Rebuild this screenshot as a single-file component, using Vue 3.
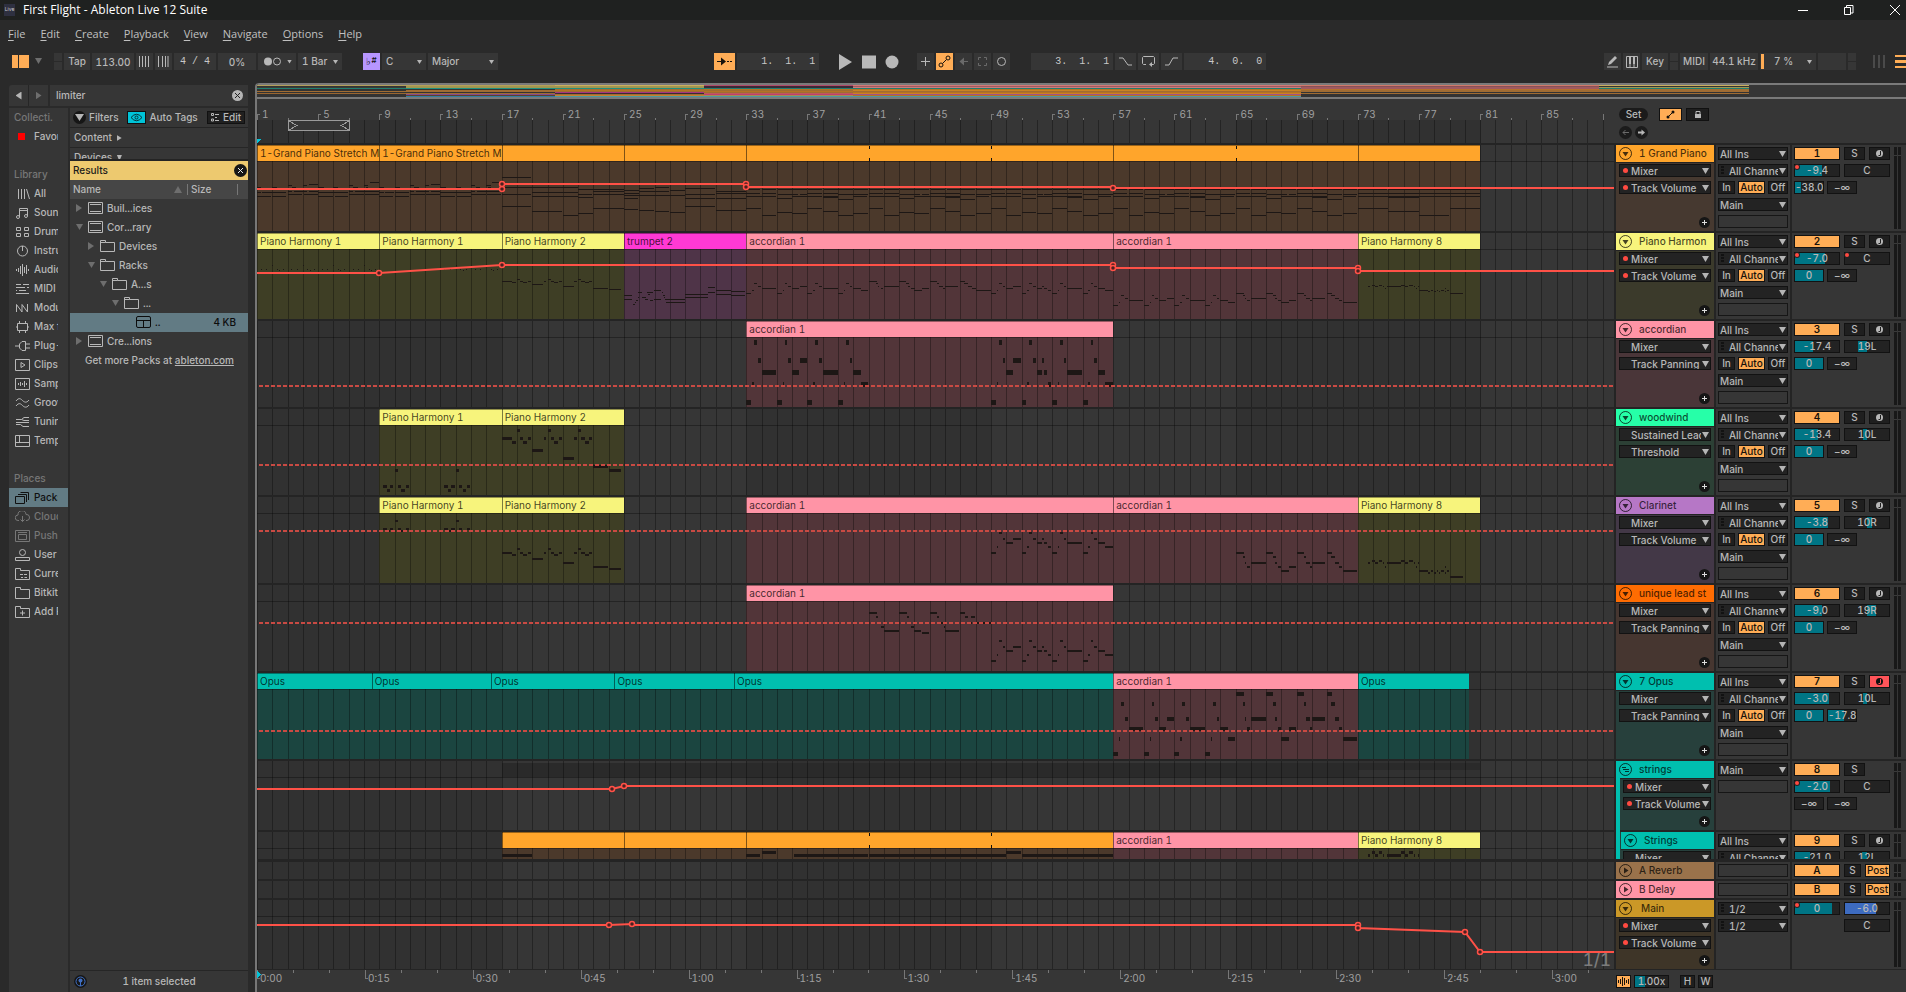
<script setup>
const W = 1357
const BAR = 15.29
const bx = (b) => Math.round((b - 1) * BAR)
const pct = (b) => ((b - 1) * BAR * 100) / W + '%'

const menus = ['File', 'Edit', 'Create', 'Playback', 'View', 'Navigate', 'Options', 'Help']

const C = {
  or: ['#ffa52b', '#4b392b'],
  ye: ['#f7f47c', '#3e3e25'],
  pk: ['#ff94a6', '#523539'],
  mg: ['#ff39d4', '#4f3448'],
  te: ['#00bfaf', '#1b4540'],
}

// Notes are [start bar, pitch step downwards, length in bars].
const harm1 = [0, 4].flatMap((o) => [[o + .25, 4, .25], [o + .7, 4, .25], [o + 1.2, 4, .25], [o + 1.75, 4, .2], [o + .5, 5, .2], [o + 1.45, 5, .25], [o + 1, 0, .22]])
const harm1b = [0, 2, 4, 6].flatMap((o) => [[o + .25, 4, .08], [o + .6, 4, .08], [o + 1, 0, .08], [o + 1.3, 4, .08], [o + 1.7, 4, .08], [o + 1.45, 5, .08]])
const harm2 = [[0, 2, .68], [.7, 3, .25], [1, 0, .24], [1.22, 2, .2], [1.42, 3, .25], [1.7, 2, .26], [2, 5, .74], [2.75, 2, .2], [3, 0, .27], [3.2, 2, .25], [3.45, 3, .25], [3.72, 2, .26], [4, 7, .78], [4.74, 2, .22], [5, 0, .22], [5.22, 2, .24], [5.46, 3, .26], [5.72, 2, .24], [6, 9, 1], [7, 10, .85]]
const riff = (o) => [[o, 12, .35], [o + .38, 9, .12], [o + .52, 2, .2], [o + .76, 5, .2]]
const accA = [...riff(0), ...riff(2), ...riff(4), ...riff(6), [1, 7, .96], [3, 7, .5], [3.5, 5, .48], [5, 7, 1], [7, 7, .5], [7.5, 9, .5]]
const accC = [...riff(16), ...riff(18), ...riff(20), ...riff(22), [17, 7, .5], [17.45, 5, .52], [19, 7, .35], [19.35, 5, .16], [19.5, 7, .22], [19.72, 9, .26], [21, 7, .98], [23, 7, .5], [23.45, 9, .55]]
const accB = [[8, 0, .55], [8.5, 2, .14], [8.62, 5, .1], [8.78, 7, .22], [9, 5, 1], [10, 0, .48], [10.45, 2, .2], [10.6, 5, .12], [10.75, 7, .28], [11, 9, .5], [11.5, 7, .46], [12, 0, .52], [12.5, 2, .14], [12.6, 5, .3], [12.88, 7, .14], [13, 5, .88], [14, 0, .32], [14.25, 2, .25], [14.5, 5, .28], [14.76, 7, .26], [15, 9, 1]]
const accU = [[8, 0, .55], [8.5, 2, .14], [8.78, 7, .24], [9, 9, 1], [10, 0, .52], [10.5, 2, .14], [10.75, 7, .26], [11, 9, .48], [11.5, 10, .5], [12, 0, .48], [12.5, 2, .12], [12.75, 5, .14], [12.9, 7, .14], [13, 9, .96], [14, 0, .32], [14.3, 2, .22], [14.7, 2, .26], [14.7, 5, .12], [15.1, 5, .14], [15.5, 5, .14], [15.9, 5, .1]]
const harm8 = [[.65, 1, .2], [.9, 0, .25], [1.15, 1, .18], [1.35, 0, .27], [1.65, 1, .1], [1.78, 3, .1], [1.9, 1, .95], [2.85, 0, .25], [3.1, 1, .2], [3.35, 0, .26], [3.65, 1, .1], [3.8, 3, .1], [3.92, 1, .08], [4, 5, .6], [4.6, 6, .16], [4.78, 5, .16], [4.95, 6, .16], [5.15, 5, .12], [5.3, 6, .12], [5.45, 5, .2], [5.68, 3, .12], [5.7, 6, .1], [5.85, 5, .15], [6, 8, .92]]
const trumpet = [[0, 62, .55], [0, 66, .55], [.62, 71, .1], [.72, 69, .1], [.82, 67, .1], [.9, 64, .12], [.95, 59, .26], [1.2, 64, .3], [1.35, 66, .25], [1.5, 59, .42], [1.55, 61, .2], [1.7, 67, .24], [1.98, 57, .46], [1.98, 66, .45], [2.5, 59, .1], [2.58, 62, .1], [2.62, 64, .1], [2.7, 66, 1.3], [2.75, 69, 1.25], [4, 61, 1.5], [4, 64, 1.5], [5.5, 54, .46], [5.5, 59, .46], [6, 57, 1.02], [6, 61, 1], [7, 58, .92], [7, 62, .92]]
const seq = (y, ...p) => p.map(([a, b]) => [a, y, b - a])
const piano1 = [
  ...seq(47, [0, .3], [.35, 1], [1, 1.95], [4, 5.1], [5.1, 6]), ...seq(51, [0, .95], [1, 1.95], [4, 5], [5.1, 6]),
  ...seq(46, [2, 2.3], [2.4, 3.3], [3.4, 4], [6, 6.3], [6.4, 8]), ...seq(49, [2, 3], [3.05, 4], [6, 7], [7.05, 8]),
  ...seq(42, [0, .3], [1, 1.35], [4, 4.4], [5, 5.35], [2.3, 2.6], [6.3, 6.6], [7.1, 7.3]), ...seq(40, [2, 2.3], [3, 3.3], [6, 6.3], [7, 7.3]), ...seq(39, [3.4, 4]), ...seq(37, [7.4, 8]),
]
const piano2 = [...seq(32, [0, 1.95]), ...seq(42, [0, 5]), ...seq(49, [0, 1.95], [5, 5.95], [6, 8]), ...seq(47, [2, 5]), ...seq(51, [2, 5]), ...seq(44, [5, 8]), ...seq(52, [5, 6]), ...seq(46, [6, 8]), ...seq(61, [0, 1.95]), ...seq(66, [2, 4]), ...seq(70, [4, 5]), ...seq(68, [5, 6]), ...seq(63, [6, 8])]
const piano3 = [...seq(45, [0, 1], [3, 4]), ...seq(43, [1, 2], [4, 6]), ...seq(42, [2, 3]), ...seq(48, [0, 1], [6, 8]), ...seq(46, [1, 3], [6, 8]), ...seq(50, [0, 1], [1, 4]), ...seq(49, [4, 6]), ...seq(53, [0, .95], [4, 6], [6, 8]), ...seq(64, [0, .95]), ...seq(65, [1, 2], [6, 8]), ...seq(66, [2, 3]), ...seq(67, [3, 4]), ...seq(61, [4, 6])]
const chug = (o) => [...seq(44, [o, o + .95], [o + 1, o + 2], [o + 2.05, o + 4], [o + 4.05, o + 5], [o + 5.1, o + 7], [o + 7.05, o + 8]), ...seq(48, [o, o + .95], [o + 1, o + 2], [o + 4, o + 5], [o + 5, o + 6]), ...seq(49, [o + 2.05, o + 3], [o + 3, o + 3.4], [o + 3.5, o + 4], [o + 6, o + 7], [o + 7, o + 8]), ...seq(51, [o, o + 2], [o + 3, o + 5], [o + 5, o + 6], [o + 7, o + 7.9]), ...seq(52, [o + 5, o + 6]), ...seq(53, [o + 2, o + 3]), ...seq(54, [o + 6, o + 7]), ...seq(63, [o, o + 1], [o + 4, o + 5]), ...seq(70, [o + 1, o + 2], [o + 6, o + 7]), ...seq(67, [o + 2, o + 3]), ...seq(68, [o + 3, o + 4], [o + 7, o + 8]), ...seq(66, [o + 5, o + 6])]
const piano8 = [...seq(44, [0, 1.95], [2, 4], [4, 8]), ...seq(48, [0, 2], [2, 8]), ...seq(51, [0, 2], [2, 8]), ...seq(52, [2, 4]), ...seq(63, [0, 2], [6, 8]), ...seq(66, [2, 4]), ...seq(70, [4, 6])]
const raw = (n) => [n, 0, 1, 1]

// Clip: [start, end, colour, name, [notes, top, step, height], ...]
const tracks = [
  { n: '1', name: '1 Grand Piano', h: 86, col: '#ffa52b', body: '#463930', dev: ['Mixer', 'Track Volume'], dots: [1, 1], vol: '-9.4', vf: 61, vd: 1, pan: 'C', sends: [['-38.0', 22], ['−∞', 0]],
    clips: [[1, 9, 'or', '1-Grand Piano Stretch M', raw(piano1)], [9, 17, 'or', '1-Grand Piano Stretch M', raw(piano1)], [17, 25, 'or', '', raw(piano2)], [25, 33, 'or', '', raw(piano3)], [33, 57, 'or', '', raw([...chug(0), ...chug(8), ...chug(16)])], [57, 73, 'or', '', raw([...chug(0), ...chug(8)])], [73, 81, 'or', '', raw(piano8)]],
    marks: [41, 49, 65], line: [[1, 44], [17, 44], [17, 39], [33, 39], [33, 42], [57, 42], [57, 43], [90, 43]], pts: [[17, 44], [17, 39], [33, 39], [33, 42], [57, 43]] },
  { n: '2', name: 'Piano Harmon', h: 86, col: '#f7f47c', body: '#3b3a2b', dev: ['Mixer', 'Track Volume'], dots: [1, 1], vol: '-7.0', vf: 68, vd: 1, pan: 'C', pd: 1, sends: [['0', 100], ['−∞', 0]],
    clips: [[1, 9, 'ye', 'Piano Harmony 1', [harm1b, 32, 1, 1]], [9, 17, 'ye', 'Piano Harmony 1', [harm1b.slice(12), 32, 1, 1]], [17, 25, 'ye', 'Piano Harmony 2', [harm2, 46, 1, 1]], [25, 33, 'mg', 'trumpet 2', raw(trumpet)], [33, 57, 'pk', 'accordian 1', [[...accA, ...accB, ...accC], 48, 1, 1]], [57, 73, 'pk', 'accordian 1', [[...accA, ...accB], 60, 1, 1]], [73, 81, 'ye', 'Piano Harmony 8', [harm8, 52, 1, 1]]],
    line: [[1, 40], [9, 40], [17, 32], [57, 32], [57, 35], [73, 35], [73, 38], [90, 38]], pts: [[9, 40], [17, 32], [57, 32], [57, 35], [73, 35], [73, 38]] },
  { n: '3', name: 'accordian', h: 86, col: '#ff94a6', body: '#4a3639', dev: ['Mixer', 'Track Panning'], vol: '-17.4', vf: 41, pan: '19L', pf: [29, 50], sends: [['0', 100], ['−∞', 0]],
    clips: [[33, 57, 'pk', 'accordian 1', [[...accA, ...accC], 7, 6, 5]]], dash: 65 },
  { n: '4', name: 'woodwind', h: 86, col: '#26ffa8', body: '#2c4035', dev: ['Sustained Lead', 'Threshold'], vol: '-13.4', vf: 52, pan: '10L', pf: [41, 50], sends: [['0', 100], ['−∞', 0]],
    clips: [[9, 17, 'ye', 'Piano Harmony 1', [harm1, 60, 4, 3]], [17, 25, 'ye', 'Piano Harmony 2', [harm2, 20, 4, 3]]], dash: 56 },
  { n: '5', name: 'Clarinet', h: 86, col: '#b677c6', body: '#433847', dev: ['Mixer', 'Track Volume'], vol: '-3.8', vf: 75, pan: '10R', pf: [50, 61], sends: [['0', 100], ['−∞', 0]],
    clips: [[9, 17, 'ye', 'Piano Harmony 1', [harm1, 23, 2, 2]], [17, 25, 'ye', 'Piano Harmony 2', [harm2, 51, 2, 2]], [33, 57, 'pk', 'accordian 1', [accC, 31, 2, 2]], [57, 73, 'pk', 'accordian 1', [accB, 55, 2, 2]], [73, 81, 'ye', 'Piano Harmony 8', [harm8, 63, 2, 2]]], dash: 34 },
  { n: '6', name: 'unique lead st', h: 86, col: '#ff6c02', body: '#463630', dev: ['Mixer', 'Track Panning'], vol: '-9.0', vf: 61, pan: '19R', pf: [50, 71], sends: [['0', 100], ['−∞', 0]],
    clips: [[33, 57, 'pk', 'accordian 1', [accU, 27, 2, 2], [accC, 51, 2, 2]]], dash: 38 },
  { n: '7', name: '7 Opus', h: 86, col: '#00bfaf', body: '#27403c', dev: ['Mixer', 'Track Panning'], vol: '-3.0', vf: 77, pan: '10L', pf: [41, 50], armed: 1, sends: [['0', 100], ['-17.8', 58]],
    clips: [[1, 8.5, 'te', 'Opus'], [8.5, 16.3, 'te', 'Opus'], [16.3, 24.38, 'te', 'Opus'], [24.38, 32.2, 'te', 'Opus'], [32.2, 57, 'te', 'Opus'], [57, 73, 'pk', 'accordian 1', [[...accA, ...accB], 19, 5, 4]], [73, 80.3, 'te', 'Opus']], dash: 58 },
  { n: '8', name: 'strings', kind: 'group', h: 69, col: '#00bfaf', body: '#27403c', dev: ['Mixer', 'Track Volume'], dots: [1, 1], vol: '-2.0', vf: 80, vd: 1, pan: 'C', sends: [['−∞', 0], ['−∞', 0]],
    clips: [], ghost: 1, line: [[1, 28], [24.2, 28], [25, 25], [90, 25]], pts: [[24.2, 28], [25, 25]] },
  { n: '9', name: 'Strings', kind: 'child', h: 27, col: '#00bfaf', body: '#27403c', dev: ['Mixer'], vol: '-21.0', vf: 34, pan: '12L', pf: [39, 50], sends: [],
    clips: [[17, 25, 'or', '', [[[0, 0, 2]], 22, 1, 3]], [25, 33, 'or', ''], [33, 57, 'or', '', [[[0, 0, .9], [3.1, 0, 4.9], [8, 0, 9], [18, 0, 6], [1, -3, 1], [17, -3, 1]], 22, 1, 3]], [57, 73, 'pk', 'accordian 1'], [73, 81, 'ye', 'Piano Harmony 8', [harm8, 19, 3, 3]]], marks: [41, 49] },
  { n: 'A', name: 'A Reverb', kind: 'ret', h: 17, col: '#9a724b', clips: [] },
  { n: 'B', name: 'B Delay', kind: 'ret', h: 17, col: '#ff94a6', clips: [] },
  { n: 'M', name: 'Main', kind: 'master', h: 69, col: '#cb9827', body: '#3e3528', dev: ['Mixer', 'Track Volume'], dots: [1, 1], clips: [],
    line: [[1, 25], [24, 25], [25.5, 24], [25.5, 25], [73, 25], [73, 28], [80, 32], [81, 52], [90, 52]], pts: [[24, 25], [25.5, 24], [73, 25], [73, 28], [80, 32], [81, 52]] },
]
const io = (t) => (!t.kind || t.kind === 'child')
const rects = (c) => c.slice(4).flatMap(([notes, top, step, h]) => notes.map(([s, p, l]) => ({ x: (c[0] - 1 + s) * BAR, y: top + p * step, w: Math.max(1, l * BAR - .4), h })))
const poly = (l) => l.map(([b, y]) => bx(b) + ',' + y).join(' ')
const bars = Array.from({ length: 89 }, (_, i) => i + 1)
const labels = Array.from({ length: 22 }, (_, i) => i * 4 + 1)
const shades = [1, 33, 65]
const ticks5 = Array.from({ length: 38 }, (_, i) => ({ x: Math.round(i * 35.97), big: i % 3 === 0 }))
const times = Array.from({ length: 13 }, (_, i) => ({ left: (i * 107.9 * 100) / W + '%', t: Math.floor(i / 4) + ':' + String((i % 4) * 15).padStart(2, '0') }))

const D = '#333333'
const overview = [
  [1, 9, ['#b3a05a', D, '#3c3c34', '#1f7f72', D, D, '#a06c33', D, '#9a6630', D, D, D]],
  [9, 17, ['#b3a05a', '#a2964f', '#a2964f', '#1f9080', D, '#a06c33', '#a06c33', D, '#a06c33', '#83498f', '#5a4030', '#2f7fa0']],
  [17, 25, ['#c9b060', '#a2964f', '#a2964f', '#1f9080', '#a06c33', '#b57224', '#a06c33', '#a5367f', '#3c2a35', '#a06c33', '#c58030', '#4a9aa0']],
  [25, 33, ['#b04a6a', '#3c2a35', '#3c2a35', '#1f7f72', '#b57224', '#a06c33', '#b57224', '#a06c33', '#c05a58', '#c03f72', '#a88a50', '#4a9aa0']],
  [33, 57, ['#d07a78', '#a05a60', '#d07a78', '#1f7f72', '#b57224', '#c98224', '#a06c33', '#b57224', '#c98224', '#a0508a', '#b57224', '#4a9aa0']],
  [57, 73, ['#d07a6a', '#8a5055', '#a05a60', '#a05a60', '#b5702c', '#a06c33', '#a06c33', D, '#a06c33', D, D, D]],
  [73, 81, ['#c9b060', D, '#a2964f', '#1f7f72', '#a06c33', '#a06c33', '#a06c33', D, '#a06c33', D, D, D]],
]

const library = [
  ['All', 'M3.5 1v10M6.500 1v10M9.500 1v10M11.500 1l3 10'],
  ['Sounds', 'M4.500 10V1.500h8V9M4.500 3.500h8M4.500 10a1.500 1.500 0 1 1-3 0a1.500 1.500 0 1 1 3 0M12.500 9a1.500 1.500 0 1 1-3 0a1.500 1.500 0 1 1 3 0'],
  ['Drums', 'M1.500 1.500h4v3h-4zM9.500 1.500h4v3h-4zM1.500 7.500h4v3h-4zM9.500 7.500h4v3h-4z'],
  ['Instruments', 'M7.500 1v5M12.500 6a5 5 0 1 1-10 0a5 5 0 1 1 10 0'],
  ['Audio Effects', 'M1.500 5v2M3.500 4v4M5.500 2v8M7.500 0v12M9.500 3v6M11.500 1v9M13.500 5v2'],
  ['MIDI Effects', 'M1 1.500h5M8 1.500h6M1 4.500h9M12 4.500h2M4 7.500h7M1 10.500h13M1 7.500h1'],
  ['Modulators', 'M1.500 10V2.500l5.500 7.500V2.500l5.500 7.500V2'],
  ['Max for Live', 'M2.500 2.500h10v7h-10zM4.500 0v2M10.500 0v2M4.500 10v2M10.500 10v2M1 6h1M13 6h1'],
  ['Plug-Ins', 'M0 6h4M10.500 1.500H7L4.500 4v4L7 10.500h3.500zM11 4h4M11 8h4'],
  ['Clips', 'M.5.5h14v11H.5zM6 3.500l4 2.500l-4 2.500z'],
  ['Samples', 'M.5.5h14v11H.5zM3.500 5v2M5.500 4v4M7.500 5v2M9.500 3v6M11.500 5v2'],
  ['Grooves', 'M1 4c3-4 5-2 6.500-.5s4 3 6.500-.5M1 9c3-4 5-2 6.500-.5s4 3 6.500-.5'],
  ['Tunings', 'M1 6.500h13M14 1.500H9L6.500 3.500H1M6.500 3.500L9 4.500h5M14 10.500H8L5.500 8.500H1'],
  ['Templates', 'M.5.5h14v11H.5zM.5 7.500h14M4.500.5v7'],
]
const places = [
  ['Packs', 'M.5 4.500h9v7h-9zM3 2.500h8.500V10M5.500.5h8V8', 'chosen'],
  ['Cloud', 'M4 9.500H3a2.500 2.500 0 0 1 0-5.500a4 4 0 0 1 8-.5a3 3 0 0 1 1 6h-1M7.500 5v5.500M5.500 8.500l2 2l2-2', 'dim'],
  ['Push', 'M.5.5h14v11H.5zM3.500 4.500h8v5h-8zM3 2.500h9', 'dim'],
  ['User Library', 'M10.500 3.500a3 3 0 1 1-6 0a3 3 0 1 1 6 0M.5 11.500v-3h14v3z', ''],
  ['Current Project', 'M.5 11.500V.5h5v2h9v9zM5 6.500h3M9 6.500h3M6 9.500h2M9.500 9.500h2.500', ''],
  ['Bitkits', 'M.5 11.500V.5h5v2h9v9z', ''],
  ['Add Folder', 'M.5 11.500V.5h5v2h9v9zM5 7h5M7.500 4.500v5', ''],
]
const tree = [
  ['Buil...ices', 0, 'r', 'pack'], ['Cor...rary', 0, 'd', 'pack'], ['Devices', 1, 'r', 'folder'], ['Racks', 1, 'd', 'folder'],
  ['A...s', 2, 'd', 'folder'], ['...', 3, 'd', 'folder'], ['..', 4, '', 'rack'], ['Cre...ions', 0, 'r', 'pack'],
]
const shapes = { pack: 'M.5.5h14v11H.5zM2 2.500h11M2 9.500h11', folder: 'M.5 11.500V.5h5v2h9v9zM.5 2.500h5', rack: 'M2 .5h11q1.500 0 1.500 1.500v8q0 1.500-1.500 1.500H2q-1.500 0-1.500-1.500v-8q0-1.500 1.500-1.500M.5 4.500h14M7.500 4.500v7' }
const range = (a, b) => ({ '--a': a + '%', '--b': b + '%' })
</script>

<template>
  <div class="app">
    <header class="title">
      <span class="logo">Live</span>
      <span class="caption">First Flight - Ableton Live 12 Suite</span>
      <div class="wins">
        <button aria-label="Minimize"><svg width="12" height="12"><path d="M1 6.500h10" /></svg></button>
        <button aria-label="Restore"><svg width="12" height="12"><path d="M1.500 3.500h6v7h-6zM3.500 3V1.500h6.500V9H8" /></svg></button>
        <button aria-label="Close"><svg width="12" height="12"><path d="M1 1l10 10M11 1L1 11" /></svg></button>
      </div>
    </header>
    <nav class="menu">
      <button v-for="m in menus" :key="m"><u>{{ m[0] }}</u>{{ m.slice(1) }}</button>
    </nav>

    <div class="bar">
      <button class="layout" aria-label="Browser"><i></i><i></i></button>
      <span class="tri dim wide"></span>
      <span class="split"><i></i><i></i></span>
      <button class="cell w26">Tap</button>
      <input class="cell w42" aria-label="Tempo" value="113.00">
      <button class="cell w17" aria-label="Nudge down"><svg width="11" height="11"><path d="M.5 0v11M3.500 0v11M6.500 0v11M9.500 0v11" /></svg></button>
      <button class="cell w17" aria-label="Nudge up"><svg width="11" height="11"><path d="M.5 0v11M4.500 0v11M7.500 0v11M10 0v11" /></svg></button>
      <input class="cell w42 mono" aria-label="Signature" value="4 / 4">
      <input class="cell w38" aria-label="Groove" value="0%">
      <button class="cell w38 between" aria-label="Metronome"><svg width="18" height="9"><circle cx="4" cy="4.500" r="4" class="fill" /><circle cx="13" cy="4.500" r="3.500" /></svg><span class="tri s"></span></button>
      <span class="pick w44"><select aria-label="Quantization"><option>1 Bar</option></select></span>
      <button class="cell w17 purple scale" aria-label="Scale">♭<sup>#</sup></button>
      <span class="pick w44"><select aria-label="Root"><option>C</option></select></span>
      <span class="pick w70"><select aria-label="Scale name"><option>Major</option></select></span>
      <span class="sp1"></span>
      <button class="cell w21 orange" aria-label="Follow"><svg width="17" height="11"><path d="M1 5.500h6M11 5.500h2M14 5.500h2" /><path d="M5 1.500l5 4l-5 4z" class="fill" /></svg></button>
      <input class="cell w82 pos mono" aria-label="Position" value="1.  1.  1">
      <div class="transport">
        <button aria-label="Play"><svg width="14" height="16"><path d="M0 0l13 8l-13 8z" class="fill" /></svg></button>
        <button aria-label="Stop"><svg width="14" height="16"><path d="M0 1.500h14v13H0z" class="fill" /></svg></button>
        <button aria-label="Record"><svg width="14" height="16"><circle cx="7" cy="8" r="6.500" class="fill" /></svg></button>
      </div>
      <button class="cell w17" aria-label="Overdub"><svg width="11" height="11"><path d="M5.500 1v9M1 5.500h9" /></svg></button>
      <button class="cell w17 orange" aria-label="Automation arm"><svg width="13" height="13"><path d="M4.500 8.500l4-4" /><circle cx="3" cy="10" r="2" /><circle cx="10" cy="3" r="2" /></svg></button>
      <button class="cell w17 off" aria-label="Re-enable automation"><svg width="11" height="11"><path d="M4 5.500h6" /><path d="M6 1.500L1.500 5.500L6 9.500z" class="fill" /></svg></button>
      <button class="cell w17 off" aria-label="Capture"><svg width="11" height="11"><path d="M1.500 4V1.500H4M7 1.500h2.500V4M9.500 7v2.500H7M4 9.500H1.500V7" /></svg></button>
      <button class="cell w17" aria-label="Session record"><svg width="11" height="11"><circle cx="5.500" cy="5.500" r="4" /></svg></button>
      <input class="cell w82 pos mono gap" aria-label="Loop start" value="3.  1.  1">
      <button class="cell w21" aria-label="Punch in"><svg width="15" height="11"><path d="M1 2h4l5 7h4" /></svg></button>
      <button class="cell w21" aria-label="Loop"><svg width="15" height="13"><path d="M5 9.500H2.500l-1-1v-6l1-1h10l1 1v6l-1 1H9" /><path d="M11 7v5L8 9.500z" class="fill" /></svg></button>
      <button class="cell w21" aria-label="Punch out"><svg width="15" height="11"><path d="M1 9h4l4-7h5" /></svg></button>
      <input class="cell w82 pos mono" aria-label="Loop length" value="4.  0.  0">
      <span class="sp2"></span>
      <button class="cell w17" aria-label="Draw"><svg width="13" height="13"><path d="M1 12h11" /><path d="M2 10l1-3l6-6l2 2l-6 6z" class="fill" /></svg></button>
      <button class="cell w17" aria-label="Computer keyboard"><svg width="12" height="12"><path d="M.5.5h11v11H.5zM4 8v3.500M8 8v3.500" /><path d="M3 0h2v8H3zM7 0h2v8H7z" class="fill" /></svg></button>
      <button class="cell w26">Key</button>
      <span class="split"><i></i><i></i></span>
      <button class="cell w28">MIDI</button>
      <button class="cell w48">44.1 kHz</button>
      <span class="pick w56 cpu"><select aria-label="CPU"><option>7 %</option></select></span>
      <span class="cell w28"></span>
      <span class="split"><i></i><i></i></span>
      <span class="vbars"><i></i><i></i><i></i></span>
      <span class="hbars"><i></i><i></i><i></i></span>
    </div>

    <div class="main">
      <aside class="browser">
        <div class="search">
          <div class="nav"><button aria-label="Back"><span class="tri l"></span></button><button aria-label="Forward"><span class="tri r dim"></span></button></div>
          <div class="query"><input aria-label="Search" value="limiter"><button aria-label="Clear"><svg width="11" height="11"><circle cx="5.500" cy="5.500" r="5.500" class="disc" /><path d="M3 3l5 5M8 3l-5 5" class="dark" /></svg></button></div>
        </div>
        <div class="cols">
          <div class="side">
            <h4>Collecti.</h4>
            <a href="#"><i class="red"></i><span>Favorites</span></a>
            <h4 class="after">Library</h4>
            <a v-for="l in library" :key="l[0]" href="#"><svg width="15" height="12"><path :d="l[1]" /></svg><span>{{ l[0] }}</span></a>
            <h4 class="after">Places</h4>
            <a v-for="l in places" :key="l[0]" href="#" :class="l[2]"><svg width="15" height="12"><path :d="l[1]" /></svg><span>{{ l[0] }}</span></a>
          </div>
          <div class="list">
            <div class="filters">
              <button class="round" aria-label="Toggle filters"><span class="tri"></span></button>Filters
              <button class="eye" aria-label="Show tags"><svg width="13" height="9"><path d="M1 4.500q5.500-6.500 11 0q-5.500 6.500-11 0z" /><circle cx="6.500" cy="4.500" r="1.500" /></svg></button>Auto Tags
              <button class="edit"><svg width="8" height="9"><path d="M.5.5h2v2h-2zM.5 6h2v2h-2zM4 1.500h4M4 7.500h4M4 4.500h2" /></svg>Edit</button>
            </div>
            <div class="tag">Content <span class="tri r t"></span></div>
            <div class="tag cut">Devices <span class="tri t"></span></div>
            <div class="results">Results<button aria-label="Close results"><svg width="13" height="13"><circle cx="6.500" cy="6.500" r="6.500" class="blk" /><path d="M4 4l5 5M9 4l-5 5" /></svg></button></div>
            <div class="cap"><span>Name</span><span class="tri u dim"></span><span class="size">Size</span></div>
            <div v-for="(t, i) in tree" :key="i" class="node" :class="{ on: t[3] === 'rack' }">
              <i v-for="k in t[1]" :key="k" class="ind"></i>
              <span class="tw"><span v-if="t[2]" class="tri dim" :class="t[2]"></span></span>
              <svg width="15" height="12"><path :d="shapes[t[3]]" /></svg><span>{{ t[0] }}</span>
              <span v-if="t[3] === 'rack'" class="kb">4 KB</span>
            </div>
            <p class="more">Get more Packs at <a href="#">ableton.com</a></p>
            <footer><svg width="13" height="13"><circle cx="6.500" cy="6.500" r="6.500" class="blk" /><circle cx="6.500" cy="6.500" r="4.500" class="bl" /><circle cx="6.500" cy="5.500" r="2" class="bf" /><path d="M6.500 5v6" class="bl" /></svg><span>1 item selected</span></footer>
          </div>
        </div>
      </aside>

      <section class="arr">
        <div class="over">
          <svg viewBox="0 0 1649 12" preserveAspectRatio="none" shape-rendering="crispEdges">
            <template v-for="o in overview" :key="o[0]">
              <rect v-for="(c, i) in o[2]" :key="i" :x="Math.round((o[0] - 1) * 18.64)" :y="i" :width="Math.round((o[1] - o[0]) * 18.64) + 1" height="1" :fill="c" />
            </template>
          </svg>
        </div>
        <div class="row ruler">
          <div class="lane">
            <svg :viewBox="`0 0 ${W} 44`" preserveAspectRatio="none" shape-rendering="crispEdges">
              <rect v-for="s in shades" :key="s" :x="bx(s)" y="21" :width="16 * BAR" height="23" class="shade" />
              <rect v-for="b in bars" :key="b" :x="bx(b)" y="21" width="1" height="23" class="grid" />
              <rect v-for="b in 45" :key="b" :x="bx(b * 2 - 1)" :y="b % 2 ? 15 : 19" width="1" :height="b % 2 ? 6 : 2" fill="#777" />
              <rect v-for="b in labels" :key="'h' + b" :x="bx(b)" y="15" width="3" height="1" fill="#777" />
              <path d="M31.500 21.500h61v10h-61zM32 22l8 4.500l-8 4.500M92 22l-8 4.500l8 4.500" fill="#363636" stroke="#9a9a9a" />
              <path d="M0 40h4l-4 4z" fill="#00c4d8" stroke="none" />
            </svg>
            <span v-for="b in labels" :key="b" class="num" :style="{ left: pct(b) }">{{ b }}</span>
          </div>
          <div class="ctl">
            <div><button class="pill">Set</button><button class="sq orange" aria-label="Automation mode"><svg width="9" height="9"><path d="M2 7l5-5" /><circle cx="2" cy="7" r="1.500" class="fill" /><circle cx="7" cy="2" r="1.500" class="fill" /></svg></button><button class="sq" aria-label="Lock envelopes"><svg width="8" height="9"><path d="M2 4V1.500h4V4" /><path d="M1 4h6v4H1z" class="fill" /></svg></button></div>
            <div><button class="circ off" aria-label="Previous locator"><svg width="9" height="9"><path d="M8 4.500H2M4.500 2L2 4.500L4.500 7" /></svg></button><button class="circ" aria-label="Next locator"><svg width="9" height="9"><path d="M1 4.500h4" stroke-width="2" /><path d="M4.500 1.500L8 4.500L4.500 7.500z" class="fill" /></svg></button></div>
          </div>
        </div>

        <div v-for="t in tracks" :key="t.n" class="row" :class="t.kind" :style="{ height: t.h + 'px' }">
          <div class="lane">
            <svg :viewBox="`0 0 ${W} ${t.h}`" preserveAspectRatio="none">
              <g shape-rendering="crispEdges">
                <rect v-for="s in shades" :key="s" :x="bx(s)" y="0" :width="16 * BAR" :height="t.h" class="shade" />
                <template v-if="t.ghost"><rect :x="bx(17)" y="2" :width="56 * BAR" height="14" fill="#2a2a2a" /><rect :x="bx(73)" y="2" :width="8 * BAR" height="7" fill="#2a2a2a" /></template>
                <rect v-for="c in t.clips" :key="c[0]" :x="bx(c[0])" y="0" :width="bx(c[1]) - bx(c[0])" :height="t.h" :fill="C[c[2]][1]" />
                <rect v-for="b in bars" :key="b" :x="bx(b)" y="0" width="1" :height="t.h" class="grid" />
                <rect v-if="t.h > 20" x="0" y="16" :width="W" height="1" class="grid" />
                <template v-for="c in t.clips" :key="c[0]">
                  <rect v-for="(r, i) in rects(c)" :key="i" :x="r.x" :y="r.y" :width="r.w" :height="r.h" fill="#1d1715" />
                  <rect :x="bx(c[0])" y="0" :width="bx(c[1]) - bx(c[0])" height="16" :fill="C[c[2]][0]" />
                  <rect :x="bx(c[0])" y="0" :width="bx(c[1]) - bx(c[0])" height="1" fill="#000" opacity=".4" />
                  <rect :x="bx(c[0])" y="0" width="1" height="16" fill="#000" opacity=".5" />
                </template>
                <template v-for="m in t.marks" :key="m"><rect :x="bx(m)" y="1" width="1" height="3" fill="#111" /><rect :x="bx(m)" y="13" width="1" height="3" fill="#111" /></template>
                <line v-if="t.dash" x1="2" :x2="W" :y1="t.dash" :y2="t.dash" class="dash" />
              </g>
              <polyline v-if="t.line" :points="poly(t.line)" class="env" />
              <ellipse v-for="(p, i) in t.pts" :key="i" :cx="bx(p[0])" :cy="p[1]" rx="2.500" ry="2.500" class="pt" />
            </svg>
            <span v-for="c in t.clips" :key="c[0]" class="cname" :style="{ left: pct(c[0]), width: (c[1] - c[0]) * BAR * 100 / W + '%' }">{{ c[3] }}</span>
            <span v-if="t.kind === 'master'" class="frac">1/1</span>
          </div>

          <div class="head" :style="{ background: t.body || t.col, '--c': t.col }">
            <div class="name">
              <button class="fold" :aria-label="'Fold ' + t.name"><svg width="13" height="13"><circle cx="6.500" cy="6.500" r="6" /><path v-if="t.kind === 'group'" d="M3 4.500h4M4 6.500h6M6 8.500h4" /><path v-else-if="t.kind === 'ret'" d="M5 3.500l4.500 3l-4.500 3z" class="fill" /><path v-else d="M3.500 5h6l-3 4.500z" class="fill" /></svg></button>
              <span>{{ t.name }}</span>
            </div>
            <div v-if="t.dev" class="devs">
              <span v-for="(d, i) in t.dev" :key="i" class="sel dev"><i v-if="t.dots" class="dot"></i><select :aria-label="t.name + ' parameter ' + i"><option>{{ d }}</option></select></span>
            </div>
            <button v-if="t.h > 60" class="plus" :aria-label="'Add lane to ' + t.name"><svg width="11" height="11"><circle cx="5.500" cy="5.500" r="5.500" class="blk" /><path d="M5.500 3v5M3 5.500h5" /></svg></button>
          </div>

          <div class="io">
            <template v-if="io(t)">
              <span class="sel"><select :aria-label="t.name + ' input'"><option>All Ins</option></select></span>
              <span class="sel ch"><select :aria-label="t.name + ' channel'"><option>All Channels</option></select></span>
              <div class="mon"><button>In</button><button class="orange">Auto</button><button>Off</button></div>
              <span class="sel"><select :aria-label="t.name + ' output'"><option>Main</option></select></span>
              <span class="blank"></span>
            </template>
            <template v-else-if="t.kind === 'group'"><span class="sel"><select aria-label="Group output"><option>Main</option></select></span><span class="blank"></span></template>
            <template v-else-if="t.kind === 'master'"><span v-for="k in 2" :key="k" class="sel ch"><select :aria-label="'Output ' + k"><option>1/2</option></select></span></template>
            <span v-else class="blank"></span>
          </div>

          <div class="mix">
            <div class="knobs">
              <template v-if="t.kind === 'master'">
                <div><span class="val dotted"><input aria-label="Main volume" value="0" :style="range(0, 84)"></span><span class="val"><input class="blue" aria-label="Cue volume" value="-6.0" :style="range(0, 70)"></span></div>
                <div class="end"><span class="val"><input aria-label="Main pan" value="C" :style="range(0, 0)"></span></div>
              </template>
              <template v-else>
                <div>
                  <button class="act orange">{{ t.n }}</button>
                  <button :class="t.kind === 'ret' ? 'solo sm' : 'solo'">S</button>
                  <button v-if="t.kind === 'ret'" class="post orange">Post</button>
                  <button v-else-if="t.kind !== 'group'" class="solo arm" :class="{ armed: t.armed }" :aria-label="'Arm ' + t.name"><svg width="9" height="9"><circle cx="4.500" cy="4.500" r="3.500" class="fill" /><path d="M5.500 2v4M3.500 6.500h2" class="groove" /></svg></button>
                </div>
                <div v-if="t.vol"><span class="val" :class="{ dotted: t.vd }"><input :aria-label="t.name + ' volume'" :value="t.vol" :style="range(0, t.vf)"></span><span class="val" :class="{ dotted: t.pd }"><input :aria-label="t.name + ' pan'" :value="t.pan" :style="range(...(t.pf || [0, 0]))"></span></div>
                <div v-if="t.sends && t.sends.length" class="sends"><span v-for="(s, i) in t.sends" :key="i" class="val"><input :aria-label="t.name + ' send ' + i" :value="s[0]" :style="range(0, s[1])"></span></div>
              </template>
            </div>
            <div class="meter"><i></i><i></i></div>
          </div>
        </div>

        <div class="row time">
          <div class="lane">
            <svg :viewBox="`0 0 ${W} 22`" preserveAspectRatio="none" shape-rendering="crispEdges">
              <rect v-for="k in ticks5" :key="k.x" :x="k.x" y="0" width="1" :height="k.big ? 8 : 3" fill="#777" />
              <rect v-for="k in ticks5.filter(q => q.big)" :key="'f' + k.x" :x="k.x" y="8" width="3" height="1" fill="#777" />
              <path d="M0 1l4 3l-4 4z" fill="#00c4d8" stroke="none" />
            </svg>
            <span v-for="k in times" :key="k.t" class="num" :style="{ left: k.left }">{{ k.t }}</span>
          </div>
          <div class="ctl foot">
            <button class="orange" aria-label="Waveform zoom"><svg width="11" height="9"><path d="M.5 3v3M2.500 2v5M4.500 0v9M6.500 1v7M8.500 3v3M10.500 2v5" /></svg></button>
            <span class="val"><input aria-label="Zoom" value="1.00x" :style="range(0, 30)"></span>
            <button class="hw">H</button><button>W</button>
          </div>
        </div>
      </section>
    </div>
  </div>
</template>

<style>
html, body { margin: 0; background: #2a2a2a; }
body { overflow: hidden; }
</style>

<style scoped>
.app { min-height: 100vh; display: flex; flex-direction: column; background: #2a2a2a; color: #b8b8b8; font: 500 10px/13px Inter, "Noto Sans", sans-serif; font-variant-numeric: tabular-nums; overflow: hidden; }
.app *, .app *::before, .app *::after { box-sizing: border-box; }
button, input, select { font: inherit; font-variant-numeric: inherit; color: inherit; background: none; border: 0; padding: 0; margin: 0; border-radius: 0; outline: 0; min-width: 0; }
button { display: inline-flex; align-items: center; justify-content: center; white-space: nowrap; }
a { color: inherit; }
svg { display: block; flex: none; fill: none; stroke: currentColor; }
svg .fill { fill: currentColor; stroke: none; }
rect { stroke: none; }
select { appearance: none; width: 100%; height: 100%; text-overflow: clip; overflow: hidden; }
.title { height: 20px; background: #1f2120; display: flex; align-items: center; padding-left: 4px; color: #fff; font: 12px/16px "Open Sans", sans-serif; }
.logo { width: 11px; height: 12px; background: #2e3040; color: #ccc; font: 5px/11px Inter, sans-serif; text-align: center; }
.caption { margin-left: 8px; }
.wins { margin-left: auto; display: flex; gap: 34px; padding-right: 5px; }
.menu { height: 33px; padding: 5px 0 0 8px; display: flex; align-items: flex-start; gap: 15px; font: 11px/18px "Open Sans", sans-serif; color: #c0c0c0; }
.menu u { text-underline-offset: 2px; }
.bar { height: 17px; margin-bottom: 13px; padding-left: 12px; display: flex; gap: 2px; }
.bar > * { flex: none; height: 17px; }
.bar > .sp1 { flex: 213 1 0; }
.bar > .sp2 { flex: 335 1 0; }
.cell { background: #363636; text-align: center; display: flex; align-items: center; justify-content: center; }
.w17 { width: 17px; } .w21 { width: 21px; } .w26 { width: 26px; } .w28 { width: 28px; } .w38 { width: 38px; } .w42 { width: 42px; } .w44 { width: 44px; } .w48 { width: 48px; } .w56 { width: 56px; } .w70 { width: 70px; } .w82 { width: 82px; }
.mono { font-family: "Liberation Mono", monospace; color: #c8c8c8; }
.bar > .pos { text-align: right; padding-right: 4px; }
.gap { margin-left: 19px; }
.bar > .layout { gap: 1px; width: 17px; }
.layout i { height: 13px; width: 6px; background: #ffad56; }
.layout i + i { width: 10px; }
.bar > .wide { margin: 5px 10px 0 4px; height: 6px; width: 7px; background: #505050; }
.tri { width: 9px; height: 7px; background: #b5b5b5; clip-path: polygon(0 0, 100% 0, 50% 100%); display: inline-block; flex: none; }
.tri.s { width: 5px; height: 4px; }
.tri.r { width: 6px; height: 8px; clip-path: polygon(0 0, 100% 50%, 0 100%); }
.tri.l { width: 6px; height: 8px; clip-path: polygon(100% 0, 0 50%, 100% 100%); }
.tri.u { clip-path: polygon(50% 0, 100% 100%, 0 100%); }
.tri.dim { background: #6e6e6e; }
.tri.t { width: 5px; height: 6px; }
.split { width: 8px; display: grid; gap: 1px; }
.split i { background: #363636; }
.between { justify-content: space-between; padding: 0 4px 0 6px; }
.pick { background: #363636; position: relative; padding: 0 4px; }
.pick::after { content: ""; position: absolute; right: 4px; top: 7px; width: 5px; height: 4px; background: #b5b5b5; clip-path: polygon(0 0, 100% 0, 50% 100%); }
.purple { background: #b796ff; color: #111; margin-left: 19px; }
.scale sup { font-size: 8px; line-height: 8px; vertical-align: top; margin-bottom: 4px; }
.orange { background: #ffad56 !important; color: #17120c !important; }
.off { color: #6a6a6a; }
.transport { display: flex; align-items: center; gap: 9px; padding: 0 16px 0 18px; }
.cpu { padding-left: 14px; }
.cpu::before { content: ""; position: absolute; left: 1px; top: 1px; width: 3px; height: 15px; background: #ffad56; }
.vbars { display: flex; gap: 3px; margin-left: 15px; padding-top: 2px; }
.vbars i { width: 2px; height: 13px; background: #4a4a4a; }
.hbars { display: grid; gap: 3px; margin-left: 8px; width: 11px; padding: 2px 0; }
.hbars i { background: #ffad56; }

.main { flex: 1; display: flex; padding-left: 9px; gap: 7px; }
.browser { width: 239px; flex: none; display: flex; flex-direction: column; gap: 2px; padding-top: 2px; }
.search { height: 21px; display: flex; gap: 2px; }
.nav { width: 39px; display: flex; background: #363636; border-radius: 3px 0 0 0; }
.nav button { flex: 1; }
.nav button + button { border-left: 1px solid #262626; }
.query { flex: 1; display: flex; align-items: center; background: #363636; padding: 0 5px 0 6px; }
.query input { flex: 1; }
.disc { fill: #b5b5b5; stroke: none; } .dark { stroke: #222; } .blk { fill: #161616; stroke: none; }
.cols { flex: 1; display: flex; gap: 2px; }
.side { width: 59px; background: #363636; }
.side h4 { margin: 0; height: 19px; line-height: 19px; font-weight: 500; font-size: 10px; color: #777; padding-left: 5px; overflow: hidden; }
.side h4.after { margin-top: 19px; }
.side a { height: 19px; display: flex; align-items: center; gap: 4px; padding: 0 10px 0 6px; text-decoration: none; }
.side a span { overflow: hidden; white-space: nowrap; }
.side .red { width: 7px; height: 7px; background: #f00; margin: 0 5px 0 3px; flex: none; }
.side .chosen { background: #627b84; color: #101010; }
.side .dim { color: #777; }
.list { flex: 1; background: #363636; display: flex; flex-direction: column; }
.filters { height: 20px; display: flex; align-items: center; border-bottom: 1px solid #242424; padding: 0 3px; gap: 3px; white-space: nowrap; }
.round { width: 13px; height: 13px; border-radius: 50%; background: #161616; }
.eye { width: 19px; height: 13px; background: #00c4d8; border: 1px solid #111; color: #06343a; margin: 0 1px 0 5px; }
.edit { margin-left: auto; width: 38px; height: 13px; background: #202020; border: 1px solid #111; gap: 4px; }
.tag { height: 20px; line-height: 19px; padding-left: 4px; border-bottom: 1px solid #262626; }
.tag.cut { height: 13px; overflow: hidden; border-bottom: 2px solid #242424; }
.tag .tri { margin-left: 2px; }
.results { height: 19px; background: #edc96f; color: #1b1b1b; display: flex; align-items: center; justify-content: space-between; padding: 0 1px 0 3px; }
.results svg { stroke: #eee; }
.cap { height: 19px; background: #464646; display: flex; align-items: center; padding: 0 10px 0 3px; }
.cap .tri { margin-left: auto; margin-right: 5px; width: 8px; }
.cap .size { width: 51px; border: solid #777; border-width: 0 1px; padding-left: 3px; line-height: 11px; }
.node { height: 19px; display: flex; align-items: center; padding: 0 0 1px 6px; }
.node .ind { width: 12px; }
.tw { width: 12px; display: flex; }
.tw .d { width: 7px; height: 6px; }
.node > span + svg + span { margin-left: 4px; }
.node.on { background: #627b84; color: #0c0c0c; }
.kb { margin-left: auto; padding-right: 12px; }
.more { margin: 0; line-height: 18px; padding-left: 15px; white-space: nowrap; }
.list footer { margin-top: auto; height: 22px; border-top: 1px solid #262626; display: flex; align-items: center; padding: 0 17px 0 4px; }
.list footer span { flex: 1; text-align: center; }
.bl { stroke: #3f6fc4; } .bf { fill: #3f6fc4; stroke: none; }

.arr { flex: 1; min-width: 0; display: flex; flex-direction: column; background: #242424; border-left: 2px solid #777; border-radius: 4px 0 0 0; overflow: hidden; }
.over { height: 16px; border: solid #7a7a7a; border-width: 2px 0; background: #363636; }
.over svg { width: 100%; height: 12px; }
.row { display: grid; grid-template-columns: minmax(0, 1fr) 98px 74px 114px; column-gap: 2px; margin-bottom: 2px; flex: none; }
.lane { position: relative; background: #363636; overflow: hidden; }
.lane > svg { width: 100%; height: 100%; }
.shade { fill: #313131; }
.grid { fill: #000; opacity: .32; }
.dash { stroke: #c94a43; stroke-width: 2; stroke-dasharray: 4 2; }
.env { stroke: #ff5147; stroke-width: 2; }
.pt { stroke: #ff5147; fill: #4a2020; stroke-width: 1.5; }
.cname { position: absolute; top: 0; height: 16px; line-height: 17px; padding-left: 3px; color: rgba(0, 0, 0, .75); font-weight: 400; white-space: nowrap; overflow: hidden; }
.frac { position: absolute; right: 3px; bottom: 0; font-size: 17px; line-height: 17px; color: #7c7c7c; }
.ruler { height: 44px; }
.num { position: absolute; top: 9px; padding-left: 5px; font-size: 10px; font-weight: 400; color: #a0a0a0; }
.time .num { top: 2px; padding-left: 3px; }
.ctl { grid-column: 2 / 5; background: #363636; padding: 9px 0 0 5px; display: flex; flex-direction: column; gap: 5px; margin-left: -2px; }
.ctl > div { display: flex; gap: 3px; }
.pill { width: 29px; height: 13px; border-radius: 7px; background: #1b1b1b; margin-right: 8px; }
.sq { width: 23px; height: 13px; background: #1f1f1f; border: 1px solid #111; margin-right: 1px; }
.circ { width: 13px; height: 13px; border-radius: 50%; background: #1b1b1b; }
.head { position: relative; }
.name { height: 17px; background: var(--c); display: flex; align-items: center; padding-left: 3px; color: rgba(0, 0, 0, .72); overflow: hidden; white-space: nowrap; }
.row:not(.ret) .name { box-shadow: 0 1px 0 #242424; }
.name span { margin-left: 7px; }
.devs { padding: 2px 3px 0; display: grid; gap: 4px; }
.sel { height: 13px; display: flex; align-items: center; position: relative; background: #232323; border: 1px solid #121212; padding: 0 9px 0 1px; }
.sel::after { content: ""; position: absolute; right: 1px; top: 3px; width: 7px; height: 6px; background: #b5b5b5; clip-path: polygon(0 0, 100% 0, 50% 100%); }
.dev { padding-left: 11px; }
.dot { position: absolute; left: 3px; top: 3px; width: 5px; height: 5px; border-radius: 50%; background: #ff4a41; }
.plus { position: absolute; right: 4px; bottom: 3px; }
.plus svg { stroke: #ddd; }
.io { background: #363636; padding: 2px 2px 0; display: flex; flex-direction: column; gap: 4px; overflow: hidden; }
.io > * { flex: none; }
.ch { padding-left: 10px; }
.ch::before { content: ""; position: absolute; left: 2px; top: 1px; width: 3px; height: 9px; background: repeating-linear-gradient(#121212 0 2px, #232323 2px 3px); }
.mon { display: grid; grid-template-columns: 17px 27px 20px; justify-content: space-between; }
.mon button, .solo, .act, .post, .foot button { height: 13px; background: #1f1f1f; border: 1px solid #121212; }
.blank { height: 13px; border: 1px solid #161616; }
.mix { background: #363636; display: flex; padding: 2px 5px 2px 2px; gap: 4px; overflow: hidden; }
.knobs { width: 96px; display: flex; flex-direction: column; gap: 4px; }
.knobs > div { display: flex; gap: 4px; flex: none; }
.act { width: 46px; font-weight: 600; }
.solo { width: 21px; }
.solo.sm { width: 17px; }
.post { width: 25px; }
.knobs > div > .arm, .knobs > div > .post { margin-left: auto; }
.groove { stroke: #1f1f1f; }
.solo.armed { background: #ff5459; color: #111; }
.armed .groove { stroke: #ff5459; }
.val { width: 46px; height: 13px; position: relative; display: block; }
.val input { width: 100%; height: 13px; border: 1px solid #121212; text-align: center; background: linear-gradient(90deg, #232323 var(--a), #007585 var(--a) var(--b), #232323 var(--b)); }
.val .blue { background: linear-gradient(90deg, #3d6bc0 var(--b), #232323 var(--b)); }
.dotted::before { content: ""; position: absolute; left: 1px; top: 1px; width: 4px; height: 4px; border-radius: 50%; background: #ff4a41; box-shadow: 0 0 0 1px #232323; }
.knobs .sends { gap: 3px; }
.sends .val { width: 30px; }
.knobs .end { justify-content: flex-end; }
.meter { display: flex; gap: 1px; }
.meter i { width: 3px; background: linear-gradient(#181818 8px, #3a3a3a 8px 9px, #181818 9px); }
.group .devs { padding-left: 7px; }
.group .head { box-shadow: inset 4px 0 0 var(--c); }
.group .head::after { content: ""; position: absolute; left: 0; top: 17px; width: 4px; height: 54px; background: var(--c); }
.child .head { border-left: 4px solid var(--c); overflow: hidden; }
.child .name { margin-left: 1px; }
.child .devs { padding-left: 3px; }
.child { overflow: hidden; margin-bottom: 3px; }
.master { margin-bottom: 1px; }
.master .name span { margin-left: 9px; }
.time { flex: 1; min-height: 22px; margin: 0; }
.foot { flex-direction: row; gap: 3px; padding: 5px 0 0 2px; align-items: flex-start; }
.foot button { width: 15px; }
.foot .val { width: 35px; }
.foot .hw { margin-left: 8px; }
</style>
